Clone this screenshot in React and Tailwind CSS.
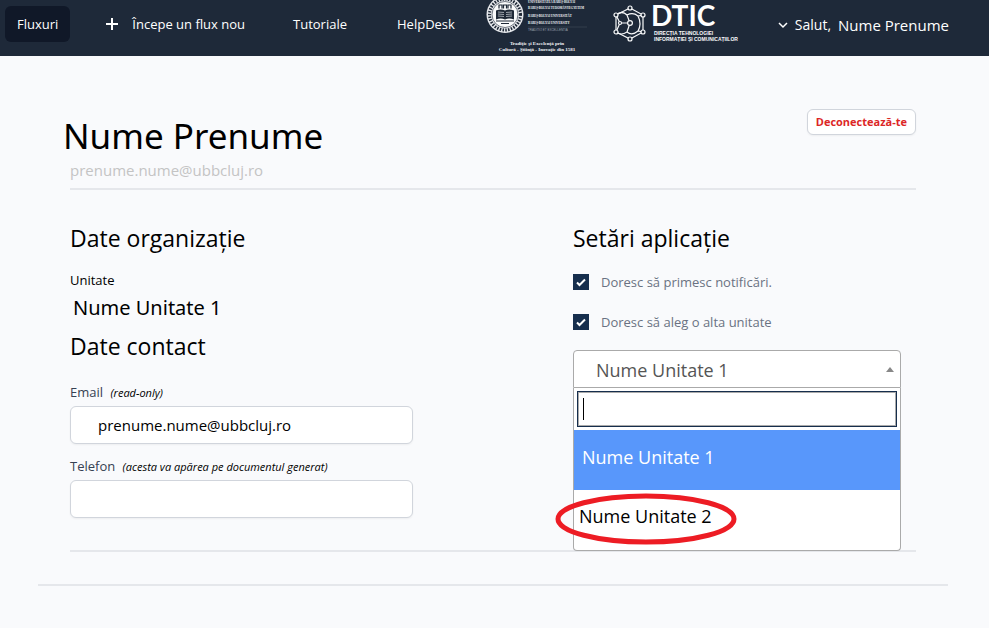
import React, { useState } from 'react'

const units = ['Nume Unitate 1', 'Nume Unitate 2'];

const UniversityLogo = () => (
    <svg viewBox="0 0 102 56" className="h-14 w-[102px] shrink-0 overflow-visible" role="img" aria-label="Universitatea Babeș-Bolyai">
        <circle cx="18" cy="14.5" r="18.5" fill="#e5e7eb" />
        <circle cx="18" cy="14.5" r="15.5" fill="none" stroke="#1f2937" strokeWidth="3" strokeDasharray="1.5 1.3" />
        <circle cx="18" cy="14.5" r="13" fill="#f9fafb" stroke="#1f2937" strokeWidth="0.6" />
        {/* towers and open book */}
        <path d="M12 8.5V5h3V8.5M16.5 8.5V5h3V8.5M21 8.5V5h3V8.5" fill="none" stroke="#1f2937" strokeWidth="1.2" />
        <path d="M9 10.5q5-2 9 0q4-2 9 0v9q-5-2-9 0q-4-2-9 0z" fill="#1f2937" />
        <path d="M11 12l6 .5M11 14l6 .5M11 16l6 .5M19 12.5l6-.5M19 14.5l6-.5M19 16.5l6-.5" stroke="#d1d5db" strokeWidth="0.7" />
        <path d="M9 21h18M14 23.5h8" stroke="#1f2937" strokeWidth="1" />
        <g fill="#f3f4f6" fontFamily="'Liberation Serif', serif" fontSize="3" fontWeight="700">
            <text x="41" y="3">UNIVERSITATEA BABEȘ-BOLYAI</text>
            <text x="41" y="9">BABEȘ-BOLYAI TUDOMÁNYEGYETEM</text>
            <text x="41" y="17">BABEȘ-BOLYAI UNIVERSITÄT</text>
            <text x="41" y="24">BABEȘ-BOLYAI UNIVERSITY</text>
        </g>
        <path d="M41 27h59" stroke="#4b5563" strokeWidth="0.5" />
        <text x="41" y="31" fill="#9ca3af" fontFamily="'Liberation Sans', sans-serif" fontSize="3">TRADITIO ET EXCELLENTIA</text>
        <g fill="#f3f4f6" fontFamily="'Liberation Serif', serif" fontSize="5" fontWeight="700" textAnchor="middle">
            <text x="50" y="45">Tradiție și Excelență prin</text>
            <text x="50" y="51">Cultură - Știință - Inovație din 1581</text>
        </g>
    </svg>
);

const DticLogo = () => (
    <svg viewBox="0 0 132 44" className="h-11 w-[132px] shrink-0 overflow-visible" role="img" aria-label="DTIC">
        <g fill="none" stroke="#f9fafb" strokeWidth="1.2">
            <path d="M17 6L30 13V30L17 37L3 30V13z" />
            <path d="M3 13L7 21H16M7 21L3 30M3 13Q9 8 14 13L17 21M14 13Q20 10 25 14L30 13M17 21L14 30Q19 34 25 29L30 30M3 30Q8 34 14 30M25 14Q29 22 25 29" />
        </g>
        <g fill="#1f2937" stroke="#f9fafb" strokeWidth="1.2">
            <circle cx="17" cy="6" r="2" />
            <circle cx="30" cy="13" r="2" />
            <circle cx="30" cy="30" r="2" />
            <circle cx="17" cy="37" r="2" />
            <circle cx="3" cy="30" r="2" />
            <circle cx="3" cy="13" r="2" />
            <circle cx="7" cy="21" r="1.5" />
            <circle cx="17" cy="21" r="2.4" />
        </g>
        <text x="38" y="24" fill="#ffffff" fontFamily="Lato, sans-serif" fontSize="28" fontWeight="700">DTIC</text>
        <g fill="#f9fafb" fontFamily="'Liberation Sans', sans-serif" fontSize="5" fontWeight="700">
            <text x="41" y="33">DIRECȚIA TEHNOLOGIEI</text>
            <text x="41" y="39">INFORMAȚIEI ȘI COMUNICAȚIILOR</text>
        </g>
    </svg>
);

const Checkbox = ({ id, label, checked, onChange }) => (
    <div className="flex items-center gap-3">
        <span className="grid size-4 shrink-0">
            <input
                id={id}
                type="checkbox"
                checked={checked}
                onChange={(e) => onChange(e.target.checked)}
                className="col-start-1 row-start-1 size-4 appearance-none border border-[#162e4d] bg-white checked:bg-[#162e4d]"
            />
            {checked && (
                <svg viewBox="0 0 16 16" className="pointer-events-none col-start-1 row-start-1 size-4">
                    <path d="M4 8.5L6.5 11L12 5.5" fill="none" stroke="#ffffff" strokeWidth="2" />
                </svg>
            )}
        </span>
        <label htmlFor={id} className="text-[13px] leading-5 text-gray-500">{label}</label>
    </div>
);

const App = () => {

    const [notifications, setNotifications] = useState(true);
    const [otherUnit, setOtherUnit] = useState(true);
    const [unit, setUnit] = useState(units[0]);
    const [search, setSearch] = useState('');
    const [phone, setPhone] = useState('');

    return (
        <div className="min-h-screen bg-[#f9fafc] font-['Open_Sans',sans-serif] text-black">
            <header className="flex h-14 items-start overflow-hidden bg-gray-800 pl-[5px] pr-10 text-[13px] text-white">
                <nav className="flex items-center gap-[26px] pt-1.5">
                    <a href="#fluxuri" className="rounded-md bg-gray-900 px-3 py-2 leading-5">Fluxuri</a>
                    <a href="#nou" className="flex items-center gap-3.5 px-2.5 py-2 leading-5">
                        <svg viewBox="0 0 12 12" className="size-3">
                            <path d="M6 0v12M0 6h12" stroke="currentColor" strokeWidth="2" />
                        </svg>
                        Începe un flux nou
                    </a>
                    <a href="#tutoriale" className="px-3 py-2 leading-5">Tutoriale</a>
                    <a href="#helpdesk" className="px-3 py-2 leading-5">HelpDesk</a>
                </nav>
                <div className="ml-5 flex items-start gap-6">
                    <UniversityLogo />
                    <div className="pt-0.5">
                        <DticLogo />
                    </div>
                </div>
                <button type="button" className="ml-auto flex items-center gap-[7px] whitespace-nowrap pt-2">
                    <svg viewBox="0 0 10 10" className="size-2.5">
                        <path d="M1 3l4 4l4-4" fill="none" stroke="currentColor" strokeWidth="1.5" />
                    </svg>
                    <span className="text-sm leading-8">Salut,</span>
                    <span className="text-[15px] leading-[34px]">Nume Prenume</span>
                </button>
            </header>

            <main className="pb-10 pl-[38px] pr-[41px] pt-[53px]">
                <div className="border-b-2 border-gray-200 pb-8">
                    <div className="px-8">
                        <div className="flex items-start justify-between border-b-2 border-gray-200 pb-[11px]">
                            <div>
                                <h1 className="-ml-[7px] font-['Noto_Sans',sans-serif] text-[35px] leading-[54px]">Nume Prenume</h1>
                                <p className="text-[15px] leading-[14px] text-[#c4c4c4]">prenume.nume@ubbcluj.ro</p>
                            </div>
                            <button type="button" className="rounded-md border border-gray-300 bg-white px-2 text-[11px] font-bold leading-6 text-[#dc2626] shadow-xs">
                                Deconectează-te
                            </button>
                        </div>

                        <div className="grid grid-cols-2 gap-40 border-b-2 border-gray-200 pb-8 pt-8">
                            <section>
                                <h2 className="text-[23px] leading-8">Date organizație</h2>
                                <p className="mt-4 text-[13px] leading-5">Unitate</p>
                                <p className="pl-[3px] font-['Noto_Sans',sans-serif] text-xl leading-9">{unit}</p>
                                <h2 className="mt-1 text-[23px] leading-8">Date contact</h2>

                                <label htmlFor="email" className="mt-5 block text-[13px] leading-5 text-gray-700">
                                    Email <em className="ml-1 text-[11px] leading-none text-black">(read-only)</em>
                                </label>
                                <input
                                    id="email"
                                    type="email"
                                    readOnly
                                    value="prenume.nume@ubbcluj.ro"
                                    className="mt-1 block h-[38px] w-full rounded-md border border-gray-300 bg-white px-[27px] text-[15px] shadow-xs"
                                />

                                <label htmlFor="phone" className="mt-3 block text-[13px] leading-5 text-gray-700">
                                    Telefon <em className="ml-1 text-[11px] leading-none text-black">(acesta va apărea pe documentul generat)</em>
                                </label>
                                <input
                                    id="phone"
                                    type="tel"
                                    value={phone}
                                    onChange={(e) => setPhone(e.target.value)}
                                    className="mt-1 block h-[38px] w-full rounded-md border border-gray-300 bg-white px-3 text-[15px] shadow-xs"
                                />
                            </section>

                            <section>
                                <h2 className="text-[23px] leading-8">Setări aplicație</h2>
                                <div className="mb-[18px] mt-[18px] flex flex-col gap-5">
                                    <Checkbox id="notifications" label="Doresc să primesc notificări." checked={notifications} onChange={setNotifications} />
                                    <Checkbox id="other-unit" label="Doresc să aleg o alta unitate" checked={otherUnit} onChange={setOtherUnit} />
                                </div>

                                <div className="relative mr-[15px] text-lg">
                                    <select
                                        aria-label="Unitate"
                                        value={unit}
                                        onChange={(e) => setUnit(e.target.value)}
                                        className="block h-[38px] w-full appearance-none rounded-t border border-[#aaaaaa] bg-white pl-[22px] pr-6 pt-0.5 text-[#555555]"
                                    >
                                        {units.map((u) => <option key={u}>{u}</option>)}
                                    </select>
                                    <svg viewBox="0 0 8 5" className="pointer-events-none absolute right-[7px] top-[17px] h-[5px] w-2">
                                        <path d="M4 0L8 5H0z" fill="#888888" />
                                    </svg>

                                    {/* open list, lies over the rules below it */}
                                    <div className="absolute left-0 right-0 top-full rounded-b border border-t-0 border-[#aaaaaa] bg-white">
                                        <div className="relative p-[3px]">
                                            <input
                                                type="text"
                                                aria-label="Caută unitate"
                                                autoFocus
                                                value={search}
                                                onChange={(e) => setSearch(e.target.value)}
                                                className="block h-9 w-full border border-[#162e4d] bg-white px-1.5 caret-transparent ring-1 ring-inset ring-[#aaaaaa] outline-none"
                                            />
                                            {!search && <span className="pointer-events-none absolute left-[9px] top-2.5 h-[22px] w-px bg-black" />}
                                        </div>
                                        <ul role="listbox" aria-label="Unități">
                                            <li role="option" aria-selected="true" className="flex h-[60px] items-center bg-[#5897fb] px-2 pb-1.5 text-white">
                                                {units[0]}
                                            </li>
                                            <li role="option" aria-selected="false" className="relative flex h-[60px] items-center px-[5px] pb-2">
                                                {units[1]}
                                                <svg viewBox="0 0 182 52" className="pointer-events-none absolute -left-[19px] top-[3px] h-[52px] w-[182px]">
                                                    <ellipse cx="91" cy="26" rx="88" ry="23" fill="none" stroke="#ed1c24" strokeWidth="5" />
                                                </svg>
                                            </li>
                                        </ul>
                                    </div>
                                </div>
                            </section>
                        </div>
                    </div>
                </div>
            </main>
        </div>
    )
}

export default App
